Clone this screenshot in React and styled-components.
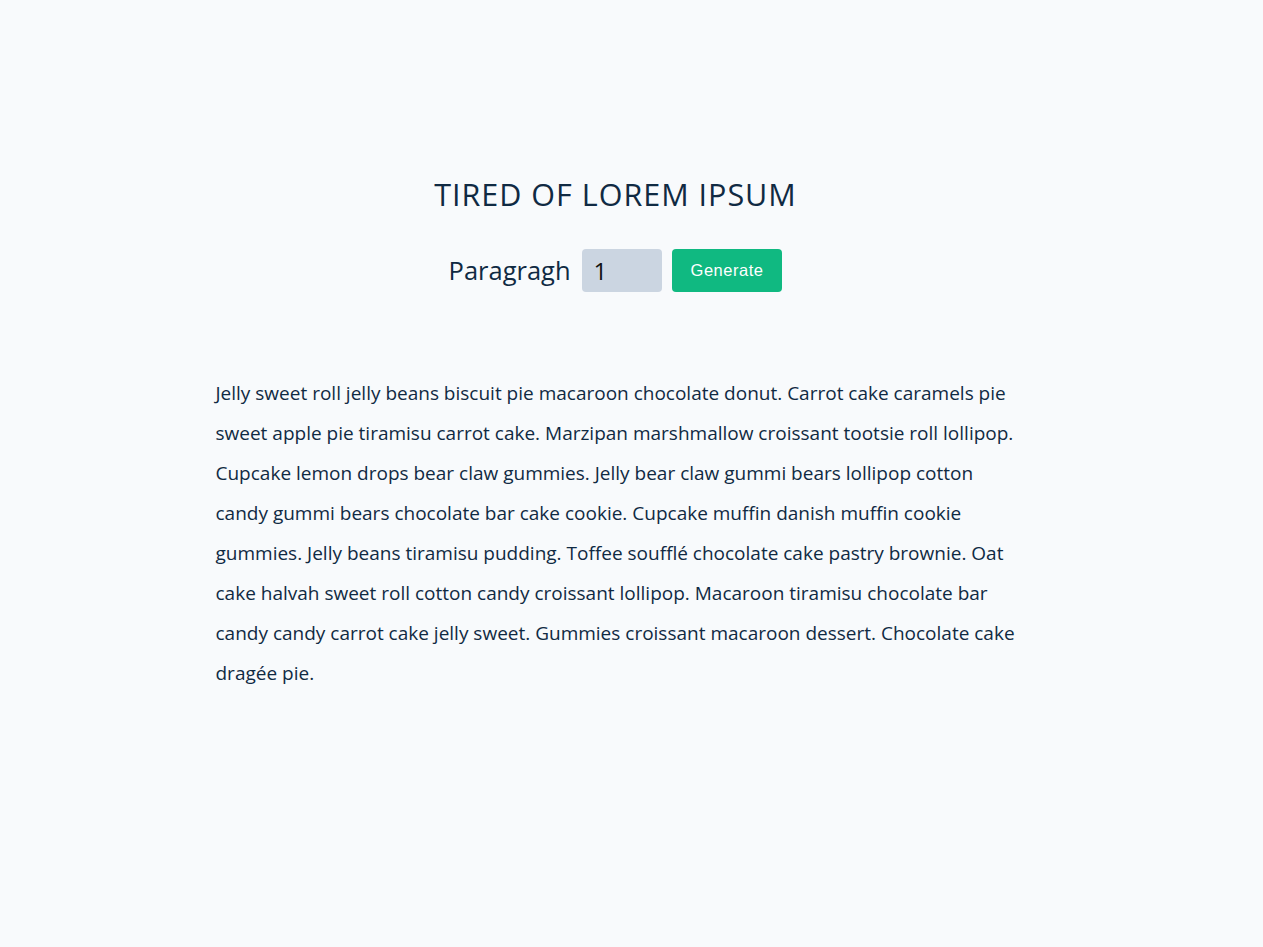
import styled, { createGlobalStyle } from "styled-components";

const GlobalStyle = createGlobalStyle`
    * {
        box-sizing: border-box;
        margin: 0;
        padding: 0;
    }
    body {
        background: #f8fafc;
        color: #102a43;
        font-family: "Open Sans", "Noto Sans", sans-serif;
    }
`;

const Section = styled.section`
    width: 832px;
    margin: 0 auto;
    padding: 176px 32px 0 0;
`;

const Title = styled.h3`
    text-align: center;
    font-size: 30.5px;
    font-weight: 400;
    letter-spacing: 1px;
    line-height: 1.2;
    text-transform: uppercase;
`;

const Form = styled.form`
    display: flex;
    justify-content: center;
    align-items: center;
    gap: 10px;
    margin-top: 36px;
    label {
        font-size: 25.5px;
        margin-right: 1px;
    }
`;

const Amount = styled.input`
    width: 80px;
    height: 43px;
    border: none;
    border-radius: 4px;
    background: #cbd5e1;
    padding: 0 12px;
    font-size: 24px;
    font-family: "Open Sans", sans-serif;
    color: #111;
    outline: none;
`;

const Button = styled.button`
    height: 43px;
    padding: 0 19px;
    border: none;
    border-radius: 4px;
    background: #10b981;
    color: #fff;
    font-family: "Liberation Sans", Arial, sans-serif;
    font-size: 16.5px;
    letter-spacing: 0.5px;
    cursor: pointer;
`;

const Article = styled.article`
    margin-top: 81px;
    p {
        font-size: 19px;
        line-height: 40px;
    }
`;

const text =
    "Jelly sweet roll jelly beans biscuit pie macaroon chocolate donut. Carrot cake caramels pie sweet apple pie tiramisu carrot cake. Marzipan marshmallow croissant tootsie roll lollipop. Cupcake lemon drops bear claw gummies. Jelly bear claw gummi bears lollipop cotton candy gummi bears chocolate bar cake cookie. Cupcake muffin danish muffin cookie gummies. Jelly beans tiramisu pudding. Toffee soufflé chocolate cake pastry brownie. Oat cake halvah sweet roll cotton candy croissant lollipop. Macaroon tiramisu chocolate bar candy candy carrot cake jelly sweet. Gummies croissant macaroon dessert. Chocolate cake dragée pie.";

const App = () => {
    return (
        <>
            <GlobalStyle />
            <Section>
                <Title>tired of lorem ipsum</Title>
                <Form onSubmit={(e) => e.preventDefault()}>
                    <label htmlFor="amount">Paragragh</label>
                    <Amount type="number" id="amount" defaultValue={1} />
                    <Button type="submit">Generate</Button>
                </Form>
                <Article>
                    <p>{text}</p>
                </Article>
            </Section>
        </>
    );
};

export default App;
